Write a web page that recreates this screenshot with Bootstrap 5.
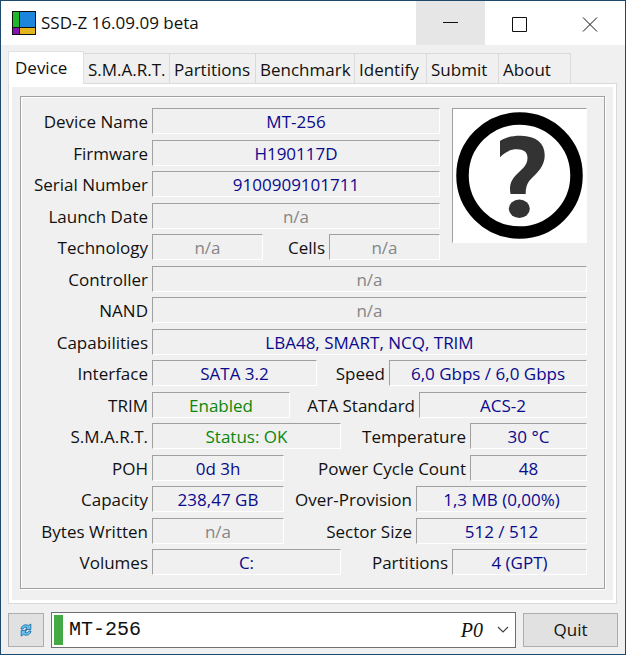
<!DOCTYPE html>
<html lang="en">
<head>
<meta charset="utf-8">
<meta name="viewport" content="width=device-width, initial-scale=1">
<title>SSD-Z 16.09.09 beta</title>
<link href="https://cdn.jsdelivr.net/npm/bootstrap@5.3.0/dist/css/bootstrap.min.css" rel="stylesheet">
<style>
  body { font-family: "Open Sans", "Noto Sans", sans-serif; font-size: 17px; line-height: 24px; color: #111; background: #f0f0f0; }
  .window { border: 1px solid #1d4a6c; }
  .titlebar { height: 44px; padding-left: 11px; }
  .app-icon { width: 24px; height: 24px; }
  .app-title { gap: 5px; }
  .win-btn { width: 69px; border: 0; border-radius: 0; }
  .win-btn.hovered { background: #e6e6e6; }
  .win-btn.closer { width: 71px; }
  .tabs { padding: 6px 7px 0; border: 0; }
  .tabs .nav-link { height: 30px; margin: 0 0 0 -1px; padding: 2px 0 0 4px; border: 1px solid #dadada; border-bottom: 0; border-radius: 0; color: #111; background: #f0f0f0; line-height: 26px; white-space: nowrap; text-align: left; }
  .tabs .nav-link.active { height: 33px; width: 76px; margin: 0 0 -1px; padding: 0 0 0 6px; background: #fff; position: relative; color: #111; }
  .tabs .tab-l { width: 100px; }
  .tabs .tab-m { width: 87px; }
  .tabs .tab-s { width: 73px; }
  .pane { margin: 0 8px 0 7px; border: 1px solid #dadada; background: #fff; padding: 3px; }
  .pane-body { background: #f0f0f0; padding: 9px 8px 11px; }
  .group { border: 1px solid #a0a0a0; box-shadow: inset 1px 1px #fff, 1px 1px #fff; padding: 11px 17px 13px 10px; }
  .specs { display: grid; grid-template-columns: minmax(0, 1fr) 147px; grid-template-rows: repeat(15, 26px); row-gap: 5px; align-content: space-between; }
  .spec { grid-column: 1 / -1; display: grid; grid-template-columns: 121px minmax(0, 1fr); }
  .spec.beside { grid-column: 1; }
  .split { display: grid; }
  .split-tech { grid-template-columns: 111fr 66fr 111fr; }
  .split-iface { grid-template-columns: 165fr 72fr 198fr; }
  .split-trim { grid-template-columns: 138fr 129fr 168fr; }
  .split-smart { grid-template-columns: 189fr 129fr 117fr; }
  .split-poh { grid-template-columns: 132fr 186fr 117fr; }
  .split-cap { grid-template-columns: 132fr 132fr 171fr; }
  .split-vol { grid-template-columns: 189fr 111fr 135fr; }
  .spec label { padding-right: 4px; line-height: 27px; white-space: nowrap; min-width: 0; display: flex; justify-content: flex-end; }
  .spec output { border: 1px solid; border-color: #a0a0a0 #fff #fff #a0a0a0; text-align: center; color: #0a0a8c; line-height: 26px; height: 26px; white-space: nowrap; min-width: 0; }
  .spec output.na { color: #868686; }
  .spec output.good { color: #0a870a; }
  .brand { grid-column: 2; grid-row: 1 / span 5; justify-self: end; align-self: start; width: 135px; height: 135px; background: #fff; border: 1px solid; border-color: #a0a0a0 #fff #fff #a0a0a0; }
  .bottom { padding: 8px 7px 6px; gap: 7px; }
  .flat { border: 1px solid #adadad; border-radius: 0; background: #e1e1e1; height: 34px; padding: 0; color: #111; font-size: 17px; }
  .refresh { width: 36px; }
  .quit { width: 95px; }
  .drive { border: 1px solid #707070; height: 36px; padding: 2px; }
  .drive-mark { width: 9px; background: #44aa44; }
  .drive select { border: 0; background: transparent; appearance: none; font: 20px/30px "Liberation Mono", monospace; color: #111; padding: 0 0 0 6px; }
  .drive-extra { right: 6px; top: 0; bottom: 0; gap: 14px; pointer-events: none; font: italic 20px/28px "Liberation Serif", serif; }
</style>
<script src="https://cdn.jsdelivr.net/npm/bootstrap@5.3.0/dist/js/bootstrap.bundle.min.js"></script>
</head>
<body>
<main class="window d-flex flex-column min-vh-100">
  <header class="titlebar d-flex bg-white">
    <div class="app-title d-flex align-items-center flex-grow-1">
      <svg class="app-icon" viewBox="0 0 24 24" aria-hidden="true">
        <rect width="24" height="24" fill="#111"/>
        <rect x="1" y="1" width="6" height="15" fill="#1fb82b"/>
        <rect x="8" y="1" width="15" height="15" fill="#1c86dc"/>
        <rect x="1" y="17" width="6" height="6" fill="#8512b5"/>
        <rect x="8" y="17" width="15" height="6" fill="#e2b51c"/>
      </svg>
      <span>SSD-Z 16.09.09 beta</span>
    </div>
    <button class="btn win-btn hovered p-0" type="button" aria-label="Minimize"><svg width="16" height="16" stroke="#111" fill="none"><path d="M0 5.500h15"/></svg></button>
    <button class="btn win-btn p-0" type="button" aria-label="Maximize"><svg width="16" height="16" stroke="#111" fill="none"><path d="M.500 .500h14v14h-14z"/></svg></button>
    <button class="btn win-btn closer p-0" type="button" aria-label="Close"><svg width="16" height="16" stroke="#111" fill="none"><path d="M1 .500l14 14M15 .500L1 14.500"/></svg></button>
  </header>

  <div class="nav nav-tabs tabs flex-nowrap align-items-end" role="tablist">
    <button class="nav-link active" type="button" role="tab" aria-selected="true">Device</button>
    <button class="nav-link tab-m" type="button" role="tab">S.M.A.R.T.</button>
    <button class="nav-link tab-m" type="button" role="tab">Partitions</button>
    <button class="nav-link tab-l" type="button" role="tab">Benchmark</button>
    <button class="nav-link tab-s" type="button" role="tab">Identify</button>
    <button class="nav-link tab-s" type="button" role="tab">Submit</button>
    <button class="nav-link tab-s" type="button" role="tab">About</button>
  </div>

  <section class="pane d-flex flex-column flex-grow-1" role="tabpanel" aria-label="Device">
    <div class="pane-body d-flex flex-column flex-grow-1">
      <div class="group d-flex flex-column flex-grow-1">
        <div class="specs flex-grow-1">
          <div class="spec beside"><label for="name">Device Name</label><output id="name">MT-256</output></div>
          <svg class="brand" viewBox="0 0 133 133" role="img" aria-label="Unknown vendor">
            <circle cx="66.500" cy="66.500" r="57" fill="none" stroke="#000" stroke-width="12.500"/>
            <path fill="#333" d="M47 32C53 28 60 26.500 68 26.700C83 27 91.700 34 91.700 46C91.700 54 88 60 82 66C76 71.500 72.700 75 72.700 85H57.500C56 76 58 71 64 65C70 59 74.500 56 74.500 49C74.500 43 70.500 40.300 64 40.300C57 40.300 52 43 47 48.300Z"/>
            <ellipse cx="66.300" cy="99.700" rx="10.500" ry="9.200" fill="#333"/>
          </svg>
          <div class="spec beside"><label for="fw">Firmware</label><output id="fw">H190117D</output></div>
          <div class="spec beside"><label for="serial">Serial Number</label><output id="serial">9100909101711</output></div>
          <div class="spec beside"><label for="launch">Launch Date</label><output id="launch" class="na">n/a</output></div>
          <div class="spec beside"><label for="tech">Technology</label>
            <div class="split split-tech"><output id="tech" class="na">n/a</output><label for="cells">Cells</label><output id="cells" class="na">n/a</output></div></div>
          <div class="spec"><label for="ctrl">Controller</label><output id="ctrl" class="na">n/a</output></div>
          <div class="spec"><label for="nand">NAND</label><output id="nand" class="na">n/a</output></div>
          <div class="spec"><label for="caps">Capabilities</label><output id="caps">LBA48, SMART, NCQ, TRIM</output></div>
          <div class="spec"><label for="iface">Interface</label>
            <div class="split split-iface"><output id="iface">SATA 3.2</output><label for="speed">Speed</label><output id="speed">6,0 Gbps / 6,0 Gbps</output></div></div>
          <div class="spec"><label for="trim">TRIM</label>
            <div class="split split-trim"><output id="trim" class="good">Enabled</output><label for="ata">ATA Standard</label><output id="ata">ACS-2</output></div></div>
          <div class="spec"><label for="smart">S.M.A.R.T.</label>
            <div class="split split-smart"><output id="smart" class="good">Status: OK</output><label for="temp">Temperature</label><output id="temp">30 °C</output></div></div>
          <div class="spec"><label for="poh">POH</label>
            <div class="split split-poh"><output id="poh">0d 3h</output><label for="cycles">Power Cycle Count</label><output id="cycles">48</output></div></div>
          <div class="spec"><label for="capacity">Capacity</label>
            <div class="split split-cap"><output id="capacity">238,47 GB</output><label for="over">Over-Provision</label><output id="over">1,3 MB (0,00%)</output></div></div>
          <div class="spec"><label for="written">Bytes Written</label>
            <div class="split split-cap"><output id="written" class="na">n/a</output><label for="sector">Sector Size</label><output id="sector">512 / 512</output></div></div>
          <div class="spec"><label for="volumes">Volumes</label>
            <div class="split split-vol"><output id="volumes">C:</output><label for="parts">Partitions</label><output id="parts">4 (GPT)</output></div></div>
        </div>
      </div>
    </div>
  </section>

  <footer class="bottom d-flex align-items-center">
    <button class="btn flat refresh d-flex align-items-center justify-content-center" type="button" aria-label="Refresh">
      <svg width="12" height="14" viewBox="0 0 12 14" fill="#6bc1ee" stroke="#1b6fa8" stroke-width=".9" stroke-linejoin="round">
        <path d="M1 6C1.500 2.500 5 .800 8.300 2.500L10.800 1v5.500H5.500L7 4.700C5.300 3.800 3.500 4.500 3 6z"/>
        <path d="M11 8c-.500 3.500-4 5.200-7.300 3.500L1.200 13V7.500h5.300L5 9.300C6.700 10.200 8.500 9.500 9 8z"/>
      </svg>
    </button>
    <div class="drive d-flex flex-grow-1 bg-white position-relative">
      <span class="drive-mark"></span>
      <select class="flex-grow-1" aria-label="Drive"><option>MT-256</option></select>
      <span class="drive-extra position-absolute d-flex align-items-center">P0
        <svg width="12" height="8" viewBox="0 0 12 8" fill="none" stroke="#444" stroke-width="1.200"><path d="M1 1l5 5 5-5"/></svg>
      </span>
    </div>
    <button class="btn flat quit" type="button">Quit</button>
  </footer>
</main>
</body>
</html>
